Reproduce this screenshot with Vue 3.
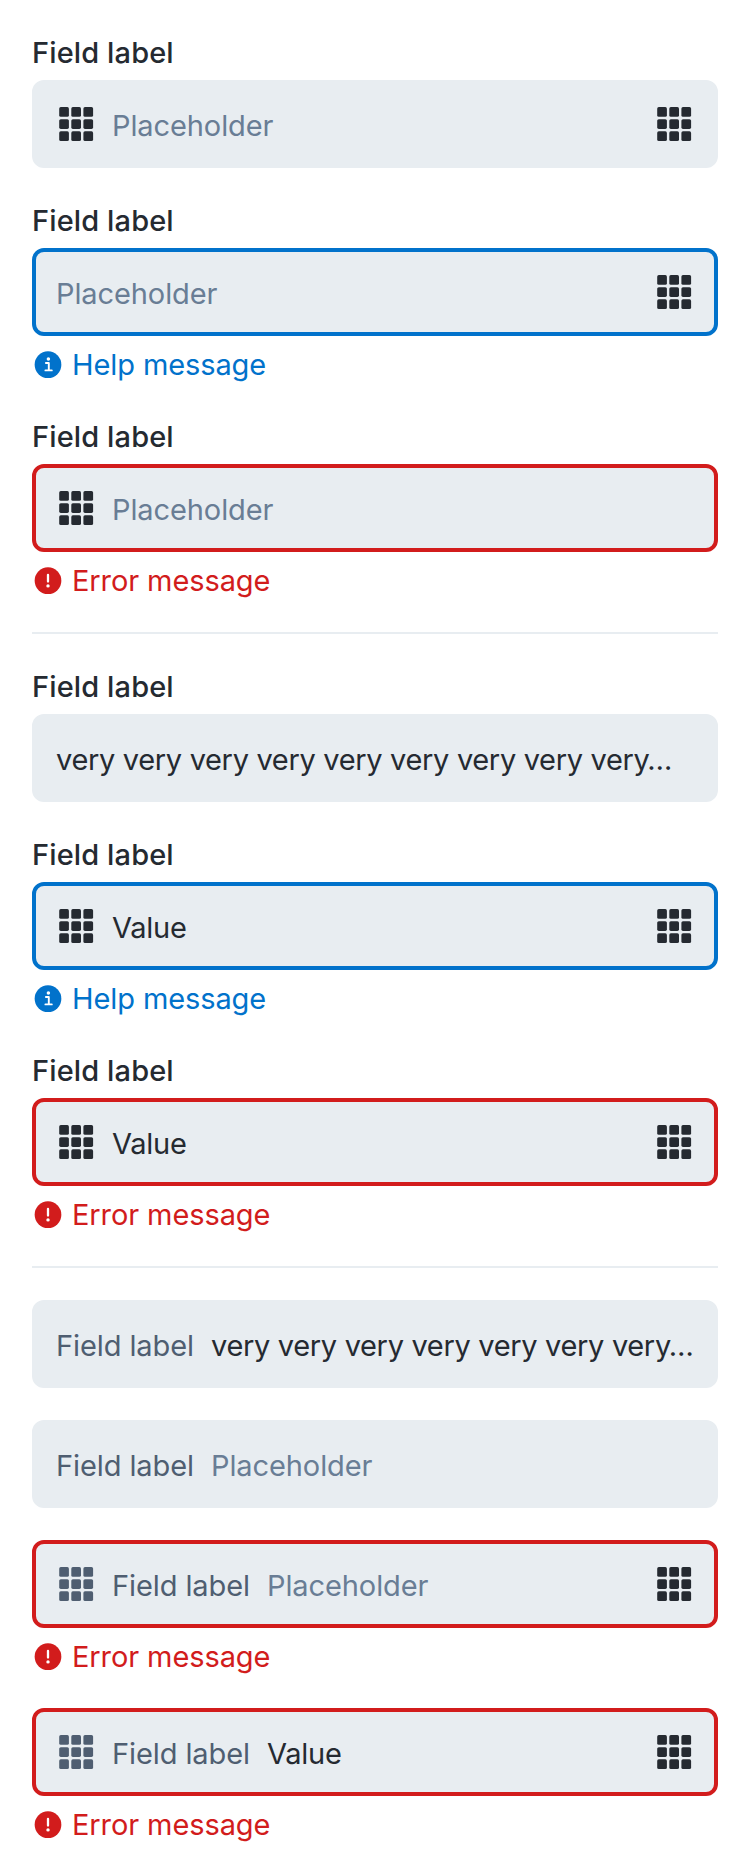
<script setup>
const very = (n) => Array(n).fill('very').join(' ') + '…'

const groups = [
  [
    { label: 'Field label', before: true, after: true, placeholder: 'Placeholder' },
    { label: 'Field label', after: true, placeholder: 'Placeholder', state: 'help', message: 'Help message' },
    { label: 'Field label', before: true, placeholder: 'Placeholder', state: 'error', message: 'Error message' },
  ],
  [
    { label: 'Field label', long: very(9) },
    { label: 'Field label', before: true, after: true, value: 'Value', state: 'help', message: 'Help message' },
    { label: 'Field label', before: true, after: true, value: 'Value', state: 'error', message: 'Error message' },
  ],
  [
    { inline: 'Field label', long: very(7) },
    { inline: 'Field label', placeholder: 'Placeholder' },
    { inline: 'Field label', before: true, after: true, placeholder: 'Placeholder', state: 'error', message: 'Error message' },
    { inline: 'Field label', before: true, after: true, value: 'Value', state: 'error', message: 'Error message' },
  ],
]

const cells = [0, 1, 2].flatMap((r) => [0, 1, 2].map((c) => ({ x: 3.2 + c * 12.1, y: 3.1 + r * 12.1 })))
</script>

<template>
  <main class="page">
    <section v-for="(group, g) in groups" :key="g" class="group">
      <div v-for="(field, f) in group" :key="f" class="field" :class="field.state">
        <div v-if="field.label" class="label">{{ field.label }}</div>
        <div class="box">
          <svg v-if="field.before" class="grid-icon before" :class="{ muted: field.inline }" viewBox="0 0 40 40">
            <rect v-for="(c, i) in cells" :key="i" :x="c.x" :y="c.y" width="9.7" height="9.7" rx="1.6" />
          </svg>
          <span v-if="field.inline" class="inline-label">{{ field.inline }}</span>
          <span v-if="field.placeholder" class="placeholder">{{ field.placeholder }}</span>
          <span v-if="field.value" class="value">{{ field.value }}</span>
          <span v-if="field.long" class="long">{{ field.long }}</span>
          <svg v-if="field.after" class="grid-icon after" viewBox="0 0 40 40">
            <rect v-for="(c, i) in cells" :key="i" :x="c.x" :y="c.y" width="9.7" height="9.7" rx="1.6" />
          </svg>
        </div>
        <div v-if="field.message" class="message">
          <svg class="message-icon" viewBox="0 0 32 32">
            <circle cx="16" cy="16.7" r="13.35" fill="currentColor" />
            <g v-if="field.state === 'help'">
              <circle cx="16.4" cy="10.9" r="1.75" fill="#fff" />
              <path d="M13.9 15h2.9v7.1M13.4 22.4h6.4" fill="none" stroke="#fff" stroke-width="1.9" stroke-linecap="round" stroke-linejoin="round" />
            </g>
            <g v-else>
              <path d="M16 11v6.6" stroke="#fff" stroke-width="2.3" stroke-linecap="round" />
              <circle cx="16" cy="21.9" r="1.7" fill="#fff" />
            </g>
          </svg>
          <span>{{ field.message }}</span>
        </div>
      </div>
    </section>
  </main>
</template>

<style>
body {
  background: #fff;
}
</style>

<style scoped>
.page {
  box-sizing: border-box;
  width: 750px;
  padding: 32px;
  color: #252a31;
  font-family: "Inter", "Liberation Sans", sans-serif;
  font-size: 29px;
  line-height: 40px;
  letter-spacing: -0.1px;
  white-space: nowrap;
}
.group {
  display: flex;
  flex-direction: column;
  gap: 32px;
}
.group + .group {
  margin-top: 32px;
  padding-top: 32px;
  border-top: 2px solid #e8edf1;
}
.label {
  padding-top: 1px;
  margin-bottom: 7px;
  font-weight: 500;
  letter-spacing: 0.12px;
}
.box {
  box-sizing: border-box;
  display: flex;
  align-items: center;
  height: 88px;
  padding: 0 20px;
  border: 4px solid #e8edf1;
  border-radius: 12px;
  background: #e8edf1;
}
.box span {
  padding-top: 3px;
}
.help .box {
  border-color: #0172cb;
}
.error .box {
  border-color: #d21c1c;
}
.grid-icon {
  flex: none;
  width: 40px;
  height: 40px;
  fill: #252a31;
}
.before {
  margin-right: 16px;
}
.after {
  margin-left: auto;
}
.muted {
  fill: #4f5e71;
}
.inline-label {
  flex: none;
  width: 155px;
  color: #4f5e71;
}
.placeholder {
  color: #697d95;
}
.value {
  letter-spacing: -0.25px;
}
.long {
  letter-spacing: -0.33px;
}
.message {
  display: flex;
  align-items: center;
  gap: 8px;
  height: 40px;
  margin-top: 8px;
}
.message span {
  padding-top: 2px;
}
.message-icon {
  flex: none;
  width: 32px;
  height: 32px;
}
.help .message {
  color: #0172cb;
}
.error .message {
  color: #d21c1c;
}
</style>
